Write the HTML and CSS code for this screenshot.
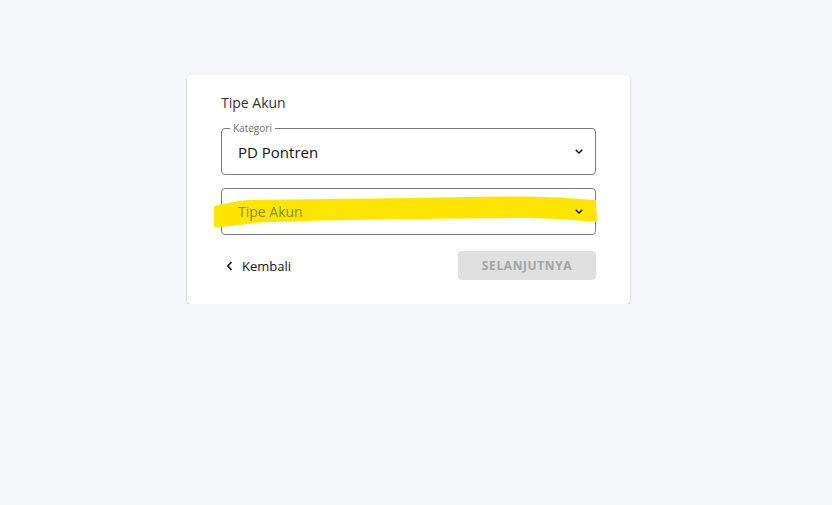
FILE: index.html
```html
<!DOCTYPE html>
<html lang="id">
<head>
<meta charset="utf-8">
<title>Tipe Akun</title>
<link rel="stylesheet" href="styles.css">
</head>
<body>
<div class="page">
  <div class="card">
    <h2 class="title">Tipe Akun</h2>
    <div class="field">
      <span class="legend">Kategori</span>
      <span class="value">PD Pontren</span>
      <svg class="chev" width="8" height="5" viewBox="0 0 8 5"><path d="M0.7 0.7 L4 4 L7.3 0.7" fill="none" stroke="#000" stroke-width="1.3"/></svg>
    </div>
    <div class="field field-plain">
      <svg class="mark" width="386" height="34" viewBox="0 0 386 34" preserveAspectRatio="none"><path d="M2 10 C 20 6, 30 4, 40 4 C 120 3, 200 2, 290 0.5 C 330 0, 360 2, 384 4 L 385 26 C 370 25, 350 22, 300 22 C 220 23, 150 23, 60 26 C 40 26, 20 31, 2 31 Z" fill="#ffe500"/></svg>
      <span class="value placeholder">Tipe Akun</span>
      <svg class="chev" width="8" height="5" viewBox="0 0 8 5"><path d="M0.7 0.7 L4 4 L7.3 0.7" fill="none" stroke="#000" stroke-width="1.3"/></svg>
    </div>
    <div class="actions">
      <a class="back" href="#">
        <svg width="7" height="10" viewBox="0 0 7 10"><path d="M5.5 1 L1.8 5 L5.5 9" fill="none" stroke="#111" stroke-width="1.6"/></svg>
        <span>Kembali</span>
      </a>
      <button class="next" disabled>SELANJUTNYA</button>
    </div>
  </div>
</div>
</body>
</html>
```
FILE: styles.css
```css
html, body {
  margin: 0;
  padding: 0;
  background: #f5f6fa;
  font-family: "Open Sans", "Liberation Sans", sans-serif;
}
.page {
  width: 817px;
  display: flex;
  justify-content: center;
  padding-top: 75px;
}
.card {
  width: 443px;
  box-sizing: border-box;
  background: #fff;
  border-radius: 4px;
  box-shadow: 0 1px 2px rgba(0,0,0,0.28);
  padding: 18px 34px 24px;
}
.title {
  margin: 0 0 15px;
  font-size: 14px;
  font-weight: 400;
  line-height: 20px;
  color: #333;
}
.field {
  position: relative;
  box-sizing: border-box;
  height: 47px;
  border: 1px solid #7a7a7a;
  border-radius: 4px;
  display: flex;
  align-items: center;
  justify-content: space-between;
  padding: 0 12px 0 16px;
}
.legend {
  position: absolute;
  left: 8px;
  top: -7px;
  padding: 0 3px;
  background: #fff;
  font-size: 10px;
  line-height: 12px;
  color: #6f6f6f;
}
.field-plain {
  margin-top: 13px;
}
.value {
  position: relative;
  z-index: 1;
  font-size: 15px;
  color: #111;
}
.placeholder {
  font-size: 14px;
  color: #8a8c08;
}
.chev {
  position: relative;
  z-index: 1;
}
.mark {
  position: absolute;
  left: -10px;
  top: 7px;
  z-index: 0;
}
.actions {
  margin-top: 16px;
  display: flex;
  justify-content: space-between;
  align-items: center;
}
.back {
  display: flex;
  align-items: center;
  gap: 9px;
  padding-left: 5px;
  text-decoration: none;
  color: #111;
  font-size: 13px;
}
.next {
  width: 138px;
  height: 29px;
  border: none;
  border-radius: 4px;
  background: #e0e0e0;
  color: #a3a3a3;
  font-family: "Open Sans", "Liberation Sans", sans-serif;
  font-weight: 700;
  font-size: 12px;
  letter-spacing: 0.6px;
}
```
